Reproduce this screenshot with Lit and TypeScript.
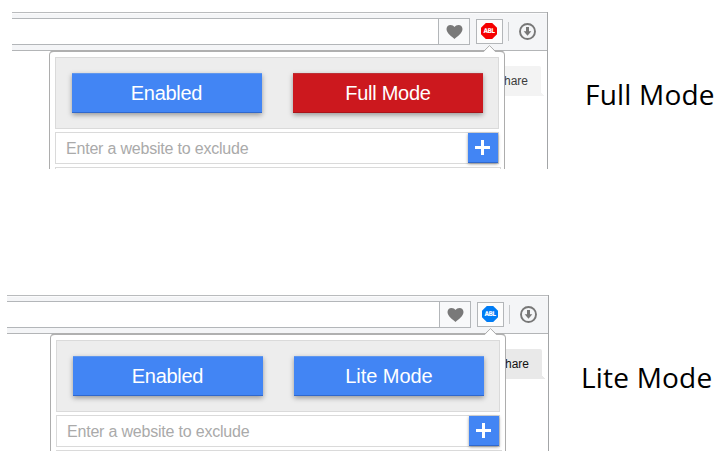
import { LitElement, html, css, svg } from "lit";
import { customElement, property } from "lit/decorators.js";

const heart = svg`<path d="M8.500 15 C6 12.800 .5 9.300 .5 5 C.5 2.500 2.300 .9 4.500 .9 C6.200 .9 7.700 1.800 8.500 3.100 C9.300 1.800 10.800 .9 12.500 .9 C14.700 .9 16.500 2.500 16.500 5 C16.500 9.300 11 12.800 8.500 15Z"/>`;

@customElement("browser-shot")
export class BrowserShot extends LitElement {
  @property({ reflect: true }) mode = "full";

  static styles = css`
    :host { display: block; position: relative; overflow: hidden; box-sizing: border-box; font-family: "Liberation Sans", Arial, sans-serif; }
    * { box-sizing: border-box; }
    .frame { height: 100%; border-right: 1px solid #a3a5a7; }
    .toolbar { display: flex; align-items: center; height: 39px; background: #f4f5f7; border-top: 1px solid #b9bbbd; border-bottom: 1px solid #b3b5b7; box-shadow: inset 0 1px #fbfbfc; }
    .address { flex: 1; height: 27px; border: solid #b3b6b9; border-width: 1px 0; background: #fff; }
    .like { width: 32px; height: 27px; border: 1px solid #b3b6b9; display: flex; align-items: center; justify-content: center; background: #f8f9fa; }
    .like svg { width: 17px; height: 16px; fill: #797979; }
    .extension { width: 27px; height: 25px; margin: 0 0 0 6px; border: 1px solid #b3b6b9; background: #fcfcfc; display: flex; align-items: center; justify-content: center; }
    .badge { width: 16px; height: 16px; margin: -1px 1px 0 0; background: #f50000; clip-path: polygon(30% 0, 70% 0, 100% 30%, 100% 70%, 70% 100%, 30% 100%, 0 70%, 0 30%); color: #fff; font: bold 6.5px/16px "DejaVu Sans Condensed", "DejaVu Sans", sans-serif; letter-spacing: -.5px; text-align: center; }
    :host([mode="lite"]) .badge { background: #007cf5; }
    .divider { width: 1px; height: 19px; margin: 0 0 0 5px; background: #c6c8ca; }
    .download { display: block; width: 17px; height: 17px; margin: 0 11px 0 10px; }
    .page { display: flex; justify-content: flex-end; padding: 15px 3px 0 0; }
    .share { width: 60px; height: 30px; padding-right: 13px; border-radius: 0 2px 0 0; text-align: right; font-size: 12px; line-height: 31px; background: #f3f3f3; color: #3c3c3c; }
    .fold { width: 3px; height: 30px; background: linear-gradient(to top right, #f3f3f3 50%, transparent 50%) bottom / 3px 3px no-repeat; }
    :host([mode="lite"]) .share { background: #e9e9e9; color: #111; }
    :host([mode="lite"]) .fold { background: linear-gradient(to top right, #e9e9e9 50%, transparent 50%) bottom / 3px 3px no-repeat; }
    .popup { position: absolute; top: 38px; right: 43px; width: 456px; height: 130px; border: 1px solid #adadad; border-top: 2px solid #b0b0b0; border-radius: 5px 5px 0 0; background: #fff; padding: 5px 5px 0; }
    .pointer { position: absolute; top: -7px; right: 8px; width: 13px; height: 8px; }
    .switches { width: 444px; height: 72px; border: 1px solid #dadada; background: #ededed; padding: 15px 0 0 16px; display: flex; gap: 31px; }
    .button { width: 190px; height: 40px; background: #4285f4; border-top: 1px solid #6097ed; border-bottom: 1px solid #3068cc; color: #fff; font-size: 20px; line-height: 39px; letter-spacing: -.28px; text-align: center; padding-right: 1px; box-shadow: 0 2px 5px rgba(0,0,0,.36); }
    :host([mode="full"]) .mode { background: #cc181e; border-top-color: #bc3036; border-bottom-color: #a91419; padding: 0; }
    :host([mode="lite"]) .mode { padding: 0; letter-spacing: -.05px; }
    .exclude { display: flex; width: 444px; height: 32px; margin-top: 3px; border: 1px solid #dadada; background: #fff; }
    .hint { flex: 1; padding-left: 10px; font-size: 16px; line-height: 31px; letter-spacing: -.2px; color: #aaa; }
    .add { width: 30px; height: 30px; background: #4285f4; border-bottom: 1px solid #3068cc; box-shadow: 0 1px 3px rgba(0,0,0,.4); }
    .add svg { display: block; width: 30px; height: 30px; }
    .next { width: 446px; height: 10px; margin-top: 3px; border: 1px solid #dadada; }
  `;

  render() {
    return html`
      <div class="frame">
        <div class="toolbar">
          <div class="address"></div>
          <div class="like"><svg viewBox="0 0 17 16">${heart}</svg></div>
          <div class="extension"><div class="badge">ABL</div></div>
          <div class="divider"></div>
          <svg class="download" viewBox="0 0 17 17" fill="none" stroke="#777"><circle cx="8.500" cy="8.500" r="7.500" stroke-width="1.900"/><path d="M8.500 4V9" stroke-width="3"/><path d="M4.700 8.300H12.300L8.500 12.800Z" fill="#777" stroke="none"/></svg>
        </div>
        <div class="page"><div class="share">Share</div><div class="fold"></div></div>
      </div>
      <div class="popup">
        <svg class="pointer" viewBox="0 0 13 8"><path d="M0 8L1 6.500L6.500 .7L12 6.500L13 8Z" fill="#fff"/><path d="M.5 6.500L6.500 .6L12.500 6.500" fill="none" stroke="#adadad"/></svg>
        <div class="switches">
          <div class="button">Enabled</div>
          <div class="button mode">${this.mode === "full" ? "Full Mode" : "Lite Mode"}</div>
        </div>
        <div class="exclude">
          <div class="hint">Enter a website to exclude</div>
          <div class="add"><svg viewBox="0 0 30 30"><path d="M7 14.500H22M14.500 7V22" stroke="#fff" stroke-width="3"/></svg></div>
        </div>
        <div class="next"></div>
      </div>`;
  }
}

@customElement("app-root")
export class AppRoot extends LitElement {
  static styles = css`
    :host { display: block; width: 726px; height: 466px; overflow: hidden; background: #fff; }
    .row { display: flex; align-items: flex-start; }
    .full { padding: 12px 0 0 12px; height: 295px; box-sizing: border-box; }
    .lite { padding-left: 7px; }
    .full browser-shot { width: 536px; height: 157px; }
    .lite browser-shot { width: 542px; height: 156px; }
    .label { font: 28px/40px "Open Sans", "Noto Sans", sans-serif; letter-spacing: .2px; color: #000; white-space: nowrap; }
    .full .label { margin: 62px 0 0 37px; }
    .lite .label { margin: 62px 0 0 32px; }
  `;

  render() {
    return html`
      <div class="row full"><browser-shot mode="full"></browser-shot><div class="label">Full Mode</div></div>
      <div class="row lite"><browser-shot mode="lite"></browser-shot><div class="label">Lite Mode</div></div>`;
  }
}
